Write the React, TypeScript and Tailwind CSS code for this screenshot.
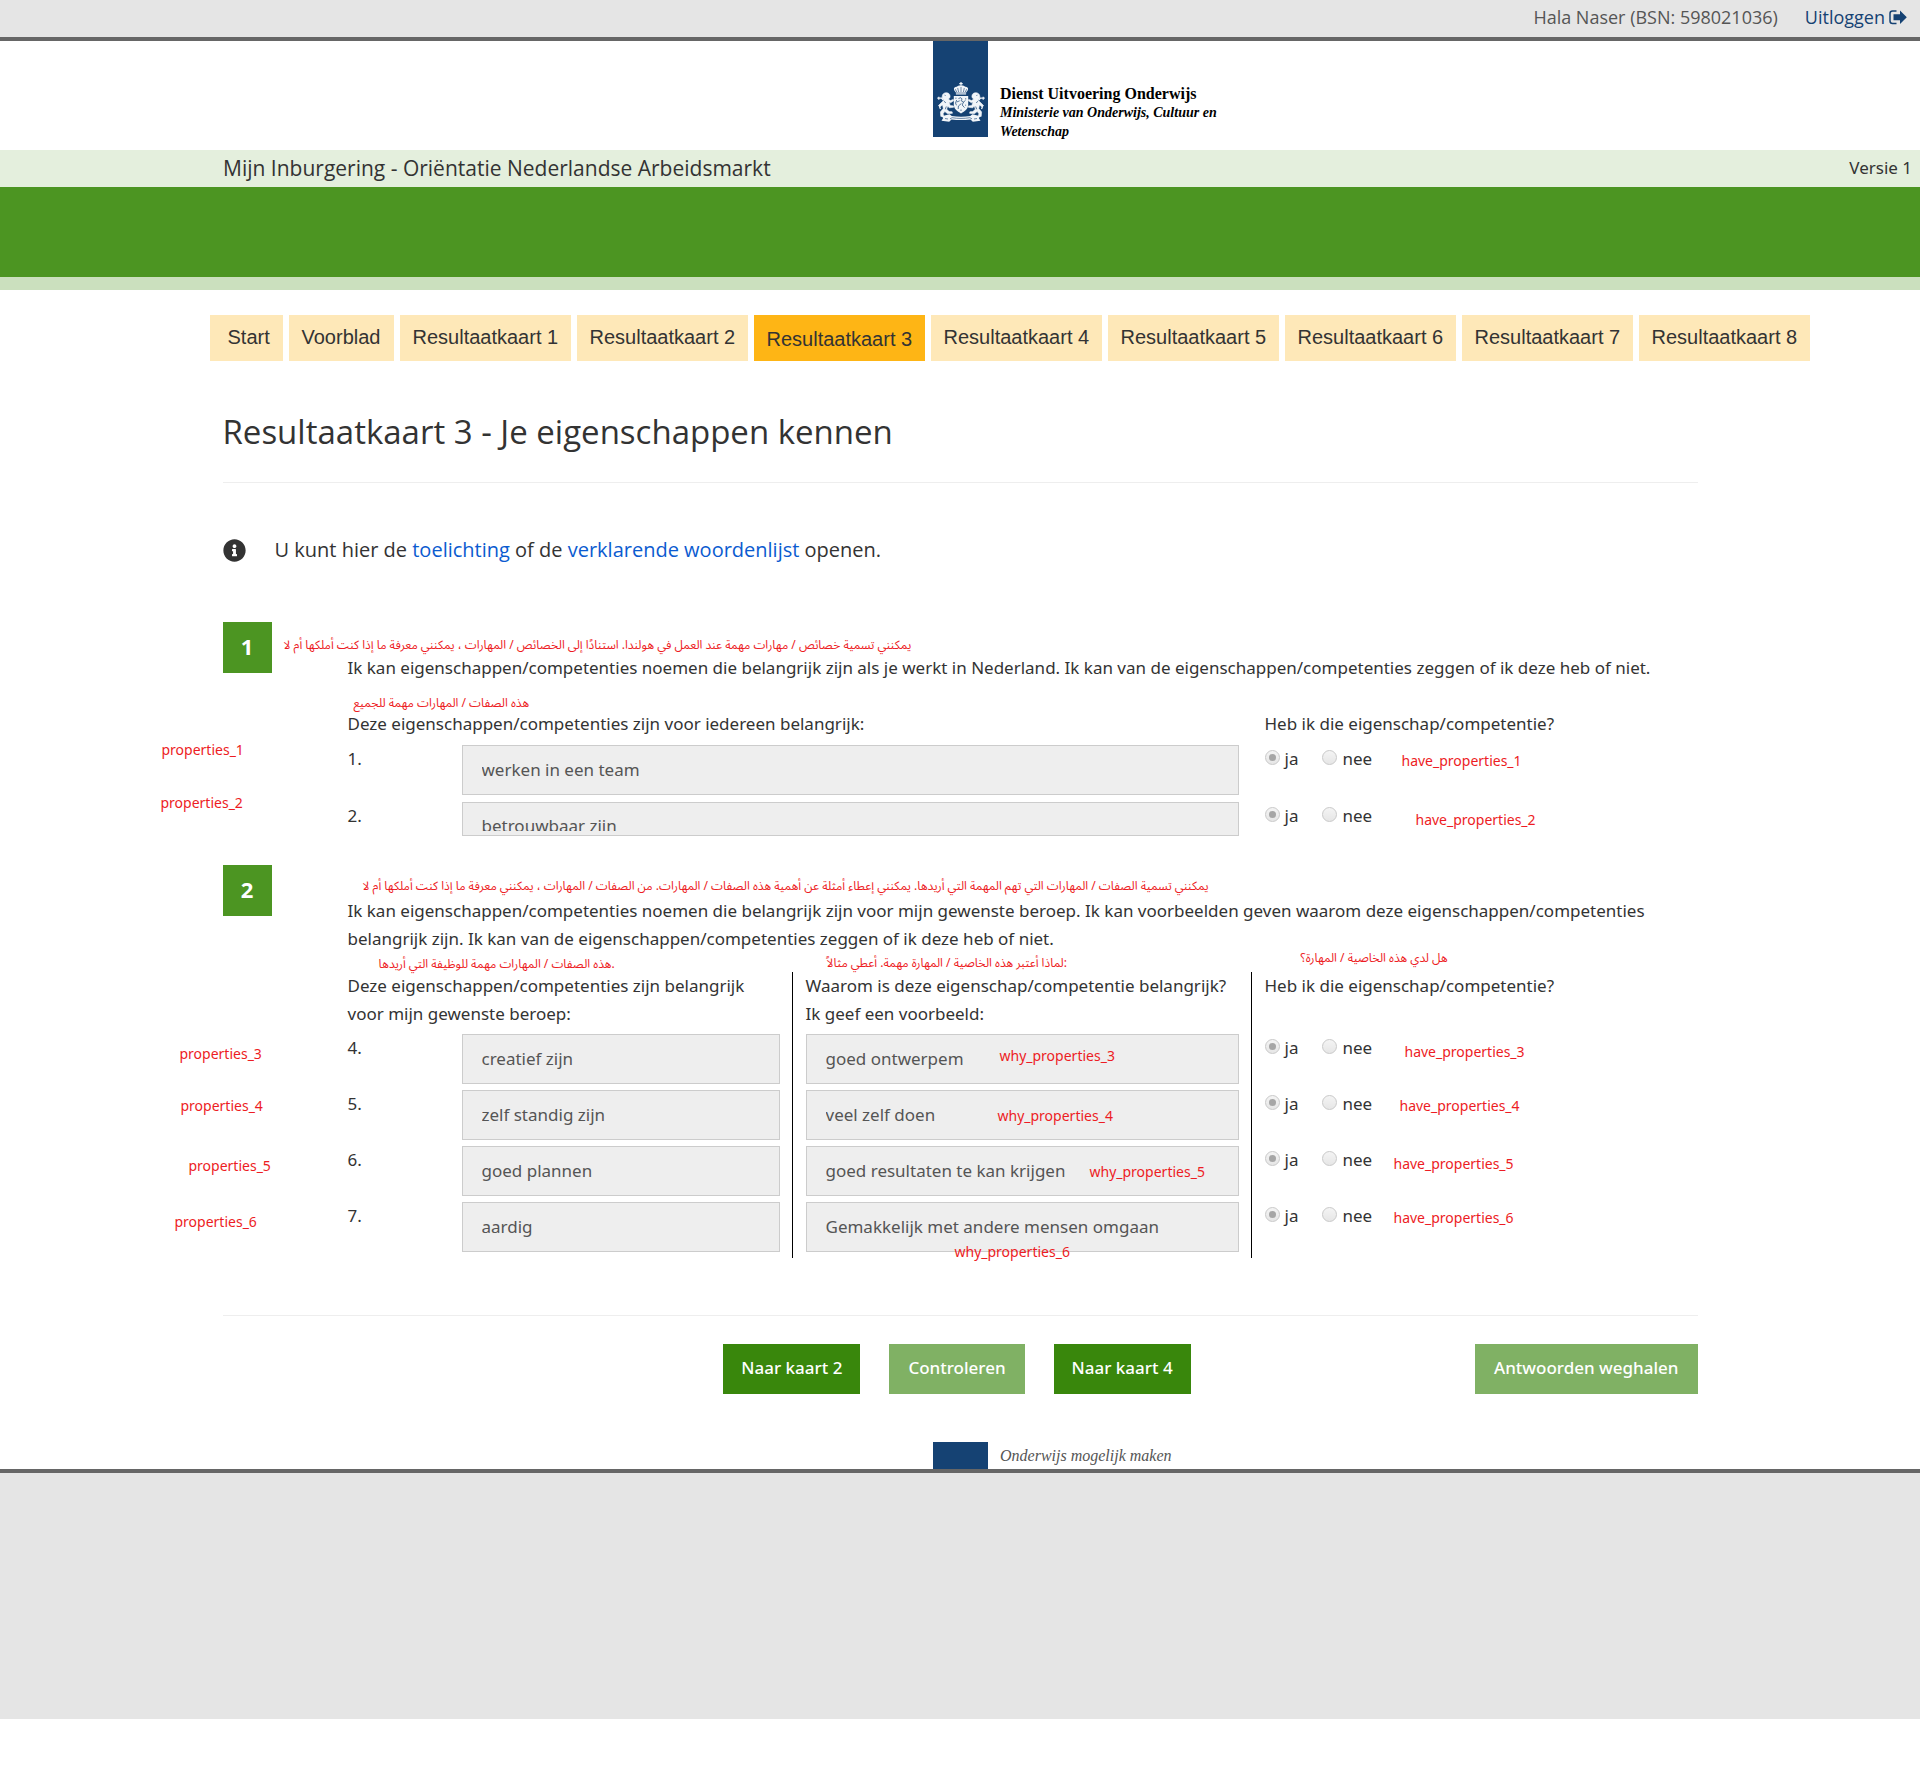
import type { ReactNode } from "react";
import { FaInfoCircle } from "react-icons/fa";

const TABS = [
  "Start",
  "Voorblad",
  "Resultaatkaart 1",
  "Resultaatkaart 2",
  "Resultaatkaart 3",
  "Resultaatkaart 4",
  "Resultaatkaart 5",
  "Resultaatkaart 6",
  "Resultaatkaart 7",
  "Resultaatkaart 8",
];

type Row = {
  id: number;
  nr: string;
  property: string;
  propertyNote: string;
  why?: string;
  whyNote?: string;
  haveNote: string;
};

const GENERAL_ROWS: Row[] = [
  { id: 1, nr: "1.", property: "werken in een team", propertyNote: "-left-[186px] -top-[5px]", haveNote: "left-[137px] top-1.5" },
  { id: 2, nr: "2.", property: "betrouwbaar zijn", propertyNote: "-left-[187px] -top-[9px]", haveNote: "left-[151px] top-2" },
];

const JOB_ROWS: Row[] = [
  { id: 3, nr: "4.", property: "creatief zijn", propertyNote: "-left-[168px] top-2.5", why: "goed ontwerpem", whyNote: "left-[194px] top-3", haveNote: "left-[140px] top-2" },
  { id: 4, nr: "5.", property: "zelf standig zijn", propertyNote: "-left-[167px] top-1.5", why: "veel zelf doen", whyNote: "left-[192px] top-4", haveNote: "left-[135px] top-1.5" },
  { id: 5, nr: "6.", property: "goed plannen", propertyNote: "-left-[159px] top-2.5", why: "goed resultaten te kan krijgen", whyNote: "left-[284px] top-4", haveNote: "left-[129px] top-2" },
  { id: 6, nr: "7.", property: "aardig", propertyNote: "-left-[173px] top-2.5", why: "Gemakkelijk met andere mensen omgaan", whyNote: "left-[149px] top-10", haveNote: "left-[129px] top-1.5" },
];

const FIELD =
  "block h-[50px] w-full border border-[#ccc] bg-[#eee] px-[19px] pb-0.5 text-[17px] leading-7 text-[#555]";

function Note({ place, children }: { place: string; children: ReactNode }) {
  return (
    <span className={`pointer-events-none absolute whitespace-nowrap text-sm leading-5 text-[#ed1c24] ${place}`}>
      {children}
    </span>
  );
}

function ArabicNote({ place, dir = "rtl", children }: { place: string; dir?: "rtl" | "ltr"; children: ReactNode }) {
  return (
    <span
      lang="ar"
      dir={dir}
      className={`pointer-events-none absolute whitespace-nowrap font-['Noto_Sans_Arabic','Noto_Sans','DejaVu_Sans',sans-serif] text-xs leading-5 text-[#ed1c24] ${place}`}
    >
      {children}
    </span>
  );
}

function Radio({ name, label, checked }: { name: string; label: string; checked?: boolean }) {
  return (
    <label className="flex gap-[5px]">
      <input
        type="radio"
        name={name}
        defaultChecked={checked}
        disabled
        className="mt-[5px] grid size-[15px] shrink-0 appearance-none place-items-center rounded-full border border-[#c9c9c9] bg-linear-to-b from-[#f4f4f4] to-[#e6e6e6] before:size-[7px] before:rounded-full checked:before:bg-[#a6a6a6]"
      />
      {label}
    </label>
  );
}

function HaveRow({ row }: { row: Row }) {
  return (
    <div className="relative flex h-[50px] gap-6" role="radiogroup" aria-label={`Heb ik eigenschap ${row.nr}`}>
      <Radio name={`have_${row.id}`} label="ja" checked />
      <Radio name={`have_${row.id}`} label="nee" />
      <Note place={row.haveNote}>have_properties_{row.id}</Note>
    </div>
  );
}

function Badge({ children }: { children: ReactNode }) {
  return (
    <div className="flex h-[51px] w-[49px] shrink-0 items-center justify-center bg-[#4c9522] pb-1 text-[22px] font-bold text-white">
      {children}
    </div>
  );
}

function Lion() {
  return (
    <g>
      {/* mane, head, body and legs */}
      <path
        d="M5.2 14.2c.2-2.2 2-3.6 4.2-3.5 2.200.1 3.700 1.600 3.700 3.500 0 1.300-.7 2.200-1.700 2.900l1.900 1.500 3-1.200.6 1.200-3.300 2.200-1.700-.7 1.300 3.400 3.400.4v1.400l-4.400.5-1.500-1.800-1 3.300 2.500 2.300 2.900.2.300 1.500-4.700.5-2.900-2.300-1.700 2.200.6 2.700H3.800l-.4-4.500 2.900-3.500-.7-3.400-2.600 1.700-1.600-.9 1-1.200 2.600-2.500 2.200-2.200-2-1.100Z"
        stroke="currentColor"
        strokeWidth=".6"
      />
      {/* sword and tail */}
      <path d="M.3 16.200h4.300l1.500 2M1.800 14.700v3" fill="none" stroke="currentColor" strokeWidth="1.200" />
      <path d="M3.800 22.500c-1.600.7-1.300 3-.3 4.500" fill="none" stroke="currentColor" strokeWidth="1.300" />
      <path d="M7.600 13.200l1 .3M9.300 24.500l-1 2.800M7.300 19.200l1.400 1.800" fill="none" stroke="#154273" strokeWidth=".7" />
    </g>
  );
}

function CoatOfArms() {
  return (
    <svg viewBox="0 0 48 41" className="h-[41px] w-12 fill-[#f1f5f9] text-[#f1f5f9]" aria-hidden="true">
      {/* crown */}
      <path d="M23.400 0h1.200v1.100h1.100v1.100h-1.100v1.500h-1.200V2.200h-1.100V1.100h1.100Z" />
      <path d="M24 3.500c2-.4 3.400.2 4.200 1.300 1.600-.2 2.900.8 2.900 2.200 0 1.500-1.400 2.600-2 3.600v1.900H18.900v-1.900c-.6-1-2-2.100-2-3.600 0-1.400 1.300-2.400 2.900-2.200.8-1.100 2.200-1.700 4.200-1.300Z" />
      <path d="M24 5v5M20.700 6l.9 4M27.300 6l-.9 4M18.300 7.200l1.500 3M29.700 7.200l-1.500 3M18.900 11h10.200" fill="none" stroke="#154273" strokeWidth=".6" />
      <Lion />
      <g transform="translate(48 0) scale(-1 1)">
        <Lion />
      </g>
      {/* shield with lion */}
      <path d="M16.800 14h14.400v8.600c0 4.300-3.300 6.900-7.200 8.800-3.900-1.900-7.200-4.500-7.200-8.800Z" />
      <path d="M21.500 16.500l2.300-.8 1.300 1.300-1 1.700 2.600 1.300 1.800-1.700M26.500 20l-1.300 3 2.300 2.600M24.400 21.500l-3 2.500-.2 3M22.700 18.800l-3 1.200M19.500 23.300l-1-2.300 1.200-3M18.300 16.200h1.200M28.700 16.200v1.200M28.600 22.700v1M24 27.500v1.500" fill="none" stroke="#154273" strokeWidth=".7" />
      {/* ribbon */}
      <path d="M4.500 34.200l8.200-1.900 2 1.700c6 1 12.600 1 18.600 0l2-1.700 8.200 1.900-1.700 1.900 1.700 2.700-7.700.9-2.300-2.200c-6.300.8-12.700.8-19 0l-2.300 2.200-7.700-.9 1.700-2.700Z" />
      <path d="M13 36.900l2.100-1.200c6 1 11.800 1 17.800 0l2.100 1.200M8 36.500l3 .5M40 36.500l-3 .5" fill="none" stroke="#154273" strokeWidth=".6" />
    </svg>
  );
}

function LogoutIcon() {
  return (
    <svg viewBox="0 0 18 15" className="h-[15px] w-[18px]" aria-hidden="true">
      <path d="M7.500 1H3.500Q1 1 1 3.500v7.500Q1 13.500 3.500 13.500h4" fill="none" stroke="currentColor" strokeWidth="1.500" />
      <path d="M4.500 4.200H11V.6L17.800 7.200 11 13.900v-3.600H4.500Z" fill="currentColor" />
    </svg>
  );
}

const DARK_BUTTON = "h-[50px] bg-[#39870c] px-[18px] pb-0.5 text-[17px] font-medium text-white";
const LIGHT_BUTTON = "h-[50px] bg-[#80b164] px-[19px] pb-0.5 text-[17px] font-medium text-white";

export default function App() {
  return (
    <div className="overflow-x-hidden bg-white font-['Noto_Sans','Open_Sans',sans-serif] text-[17px] leading-7 text-[#333]">
      <div className="flex h-[41px] items-center justify-end gap-[27px] border-b-4 border-[#666] bg-[#e5e5e5] pr-[13px] pb-[3px] font-['Open_Sans',sans-serif] text-lg leading-7 text-[#555]">
        <span>Hala Naser (BSN: 598021036)</span>
        <a href="#uitloggen" className="flex items-center gap-1 text-[#154273]">
          Uitloggen
          <LogoutIcon />
        </a>
      </div>

      <header>
        <div className="flex h-[109px] pl-[calc(50%-27px)]">
          <div className="flex h-24 w-[55px] shrink-0 items-end justify-center bg-[#154273] pb-3.5">
            <CoatOfArms />
          </div>
          <div className="ml-3 pt-[43px] font-['Liberation_Serif',serif] text-black">
            <p className="text-base leading-[19px] font-bold">Dienst Uitvoering Onderwijs</p>
            <p className="text-sm leading-[19px] font-bold italic">
              Ministerie van Onderwijs, Cultuur en
              <br />
              Wetenschap
            </p>
          </div>
        </div>
        <div className="flex h-[37px] items-center justify-between bg-[#e4efdd] pr-2 pb-px pl-[calc(50%-737px)]">
          <p className="font-['Open_Sans',sans-serif] text-[21px]">
            Mijn Inburgering - Oriëntatie Nederlandse Arbeidsmarkt
          </p>
          <p>Versie 1</p>
        </div>
        <div className="h-[103px] border-b-[13px] border-[#cbe0be] bg-[#4c9522]" />
      </header>

      <main className="mx-auto max-w-[1475px] pt-[25px]">
        <nav className="-mr-28 -ml-[13px] flex gap-1.5 font-['Liberation_Sans',sans-serif] text-xl leading-9">
          {TABS.map((tab, i) => (
            <a
              key={tab}
              href={`#tab-${i}`}
              aria-current={i === 4 ? "page" : undefined}
              className={`h-[46px] whitespace-nowrap ${
                i === 0 ? "w-[73px] pl-[18px]" : i === 1 ? "w-[105px] pl-[13px]" : "w-[171px] pl-[13px]"
              } ${i === 4 ? "bg-[#feb515] pt-1.5" : "bg-[#fee8b8] pt-1"}`}
            >
              {tab}
            </a>
          ))}
        </nav>

        <h1 className="mt-[51px] font-['Open_Sans',sans-serif] text-[33px] leading-10">
          Resultaatkaart 3 - Je eigenschappen kennen
        </h1>
        <hr className="mt-[30px] border-[#eee]" />

        <p className="mt-[53px] flex items-center gap-[29px] font-['Open_Sans',sans-serif] text-xl leading-7">
          <FaInfoCircle className="size-[23px]" aria-hidden="true" />
          <span>
            U kunt hier de{" "}
            <a href="#toelichting" className="text-[#0b5bd0]">
              toelichting
            </a>{" "}
            of de{" "}
            <a href="#woordenlijst" className="text-[#0b5bd0]">
              verklarende woordenlijst
            </a>{" "}
            openen.
          </span>
        </p>

        <section className="mt-[58px] flex">
          <Badge>1</Badge>
          <div className="ml-[76px] min-w-0 flex-1 pt-8">
            <p className="relative">
              <ArabicNote place="-left-16 -top-[18px]">
                يمكنني تسمية خصائص / مهارات مهمة عند العمل في هولندا. استنادًا إلى الخصائص / المهارات ، يمكنني معرفة ما إذا كنت أملكها أم لا
              </ArabicNote>
              Ik kan eigenschappen/competenties noemen die belangrijk zijn als je werkt in Nederland. Ik kan van de
              eigenschappen/competenties zeggen of ik deze heb of niet.
            </p>
            <div className="mt-7 grid grid-cols-[903fr_447fr]">
              <div className="pr-3">
                <h2 className="relative">
                  <ArabicNote place="left-1.5 -top-4">هذه الصفات / المهارات مهمة للجميع</ArabicNote>
                  Deze eigenschappen/competenties zijn voor iedereen belangrijk:
                </h2>
                <div className="mt-[7px] flex flex-col gap-[7px]">
                  <div className="relative flex">
                    <label htmlFor="property-1" className="w-[114px] shrink-0">
                      {GENERAL_ROWS[0].nr}
                    </label>
                    <input id="property-1" readOnly defaultValue={GENERAL_ROWS[0].property} className={FIELD} />
                    <Note place={GENERAL_ROWS[0].propertyNote}>properties_1</Note>
                  </div>
                  <div className="relative flex">
                    <label htmlFor="property-2" className="w-[114px] shrink-0">
                      {GENERAL_ROWS[1].nr}
                    </label>
                    <div className="w-full border border-[#ccc] bg-[#eee] pb-1">
                      <textarea
                        id="property-2"
                        readOnly
                        rows={1}
                        defaultValue={GENERAL_ROWS[1].property}
                        className="block h-7 w-full resize-none overflow-hidden px-[19px] pt-[9px] text-[17px] leading-7 text-[#555]"
                      />
                    </div>
                    <Note place={GENERAL_ROWS[1].propertyNote}>properties_2</Note>
                  </div>
                </div>
              </div>
              <div className="-mb-4 pl-3.5">
                <h2>Heb ik die eigenschap/competentie?</h2>
                <div className="mt-[7px] flex flex-col gap-[7px]">
                  {GENERAL_ROWS.map((row) => (
                    <HaveRow key={row.id} row={row} />
                  ))}
                </div>
              </div>
            </div>
          </div>
        </section>

        <section className="mt-[29px] flex">
          <Badge>2</Badge>
          <div className="ml-[76px] min-w-0 flex-1 pt-8">
            <p className="relative">
              <ArabicNote place="left-[15px] -top-5">
                يمكنني تسمية الصفات / المهارات التي تهم المهمة التي أريدها. يمكنني إعطاء أمثلة عن أهمية هذه الصفات / المهارات. من الصفات / المهارات ، يمكنني معرفة ما إذا كنت أملكها أم لا
              </ArabicNote>
              Ik kan eigenschappen/competenties noemen die belangrijk zijn voor mijn gewenste beroep. Ik kan voorbeelden
              geven waarom deze eigenschappen/competenties belangrijk zijn. Ik kan van de eigenschappen/competenties
              zeggen of ik deze heb of niet.
            </p>
            <div className="mt-[19px] grid grid-cols-[444fr_459fr_447fr]">
              <div className="pr-3 pb-1.5">
                <h2 className="relative">
                  <ArabicNote dir="ltr" place="left-[31px] -top-[17px]">
                    هذه الصفات / المهارات مهمة للوظيفة التي أريدها.
                  </ArabicNote>
                  Deze eigenschappen/competenties zijn belangrijk
                  <br />
                  voor mijn gewenste beroep:
                </h2>
                <div className="mt-1.5 flex flex-col gap-1.5">
                  {JOB_ROWS.map((row) => (
                    <div key={row.id} className="relative flex">
                      <label htmlFor={`property-${row.id}`} className="w-[114px] shrink-0">
                        {row.nr}
                      </label>
                      <input id={`property-${row.id}`} readOnly defaultValue={row.property} className={FIELD} />
                      <Note place={row.propertyNote}>properties_{row.id}</Note>
                    </div>
                  ))}
                </div>
              </div>
              <div className="border-l border-black pr-3 pb-1.5 pl-[13px]">
                <h2 className="relative">
                  <ArabicNote dir="ltr" place="left-[21px] -top-[18px]">
                    لماذا أعتبر هذه الخاصية / المهارة مهمة. أعطي مثالاً:
                  </ArabicNote>
                  Waarom is deze eigenschap/competentie belangrijk?
                  <br />
                  Ik geef een voorbeeld:
                </h2>
                <div className="mt-1.5 flex flex-col gap-1.5">
                  {JOB_ROWS.map((row) => (
                    <div key={row.id} className="relative">
                      <input
                        aria-label={`Waarom is eigenschap ${row.nr} belangrijk`}
                        readOnly
                        defaultValue={row.why}
                        className={FIELD}
                      />
                      <Note place={row.whyNote ?? ""}>why_properties_{row.id}</Note>
                    </div>
                  ))}
                </div>
              </div>
              <div className="border-l border-black pb-1.5 pl-[13px]">
                <h2 className="relative h-14">
                  <ArabicNote place="left-9 -top-[23px]">هل لدي هذه الخاصية / المهارة؟</ArabicNote>
                  Heb ik die eigenschap/competentie?
                </h2>
                <div className="mt-1.5 flex flex-col gap-1.5">
                  {JOB_ROWS.map((row) => (
                    <HaveRow key={row.id} row={row} />
                  ))}
                </div>
              </div>
            </div>
          </div>
        </section>

        <hr className="mt-[57px] border-[#eee]" />

        <div className="mt-7 grid grid-cols-[1fr_auto_1fr]">
          <div className="col-start-2 flex gap-[29px] pr-1.5">
            <button type="button" className={DARK_BUTTON}>
              Naar kaart 2
            </button>
            <button type="button" className={LIGHT_BUTTON}>
              Controleren
            </button>
            <button type="button" className={DARK_BUTTON}>
              Naar kaart 4
            </button>
          </div>
          <div className="flex justify-end">
            <button type="button" className={LIGHT_BUTTON}>
              Antwoorden weghalen
            </button>
          </div>
        </div>
      </main>

      <footer className="mt-12">
        <div className="flex pl-[calc(50%-27px)]">
          <div className="h-[27px] w-[55px] bg-[#154273]" />
          <p className="ml-3 h-[27px] font-['Liberation_Serif',serif] text-base leading-7 text-[#555] italic">
            Onderwijs mogelijk maken
          </p>
        </div>
        <div className="h-[250px] border-t-4 border-[#666] bg-[#e5e5e5]" />
      </footer>
    </div>
  );
}
